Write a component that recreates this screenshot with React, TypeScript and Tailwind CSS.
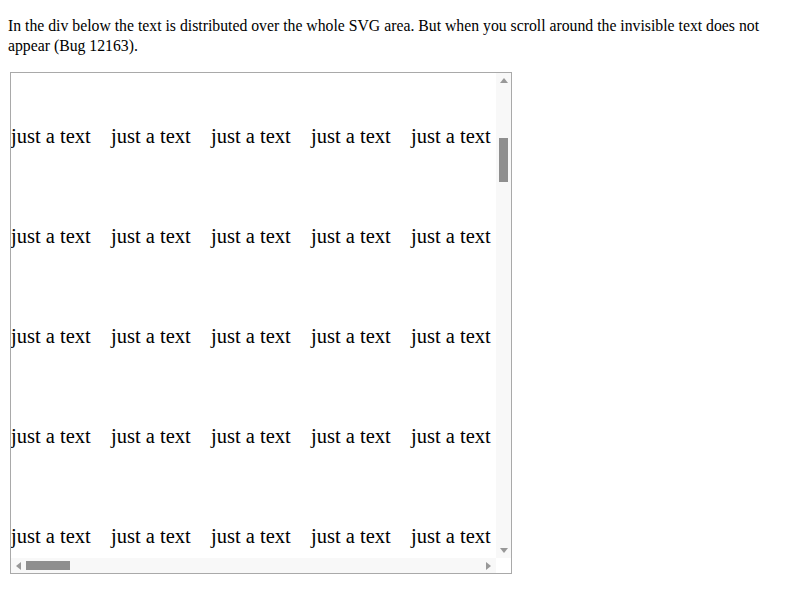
import React from "react";

function Tri({ dir }: { dir: "up" | "down" | "left" | "right" }) {
  if (dir === "up")
    return <div className="w-0 h-0 border-l-[4px] border-r-[4px] border-b-[5px] border-l-transparent border-r-transparent border-b-[#989898]" />;
  if (dir === "down")
    return <div className="w-0 h-0 border-l-[4px] border-r-[4px] border-t-[5px] border-l-transparent border-r-transparent border-t-[#989898]" />;
  if (dir === "left")
    return <div className="w-0 h-0 border-t-[4px] border-b-[4px] border-r-[5px] border-t-transparent border-b-transparent border-r-[#989898]" />;
  return <div className="w-0 h-0 border-t-[4px] border-b-[4px] border-l-[5px] border-t-transparent border-b-transparent border-l-[#989898]" />;
}

export default function App() {
  const items: React.ReactNode[] = [];
  for (let r = 0; r < 50; r++) {
    for (let c = 0; c < 50; c++) {
      items.push(
        <text key={`${r}-${c}`} x={c * 100} y={19 + r * 100}>
          just a text
        </text>
      );
    }
  }
  return (
    <div className="min-h-[600px] bg-white pt-4 px-2 font-['Liberation_Serif',serif] text-black">
      <p className="text-[15.75px] leading-[20px]">
        In the div below the text is distributed over the whole SVG area. But when you scroll around the invisible text does not appear (Bug 12163).
      </p>
      <div className="mt-4 ml-[2px] w-[502px] h-[502px] border border-[#a9a9a9] grid grid-cols-[485px_15px] grid-rows-[485px_15px]">
        <div className="overflow-hidden">
          <svg
            width={485}
            height={485}
            viewBox="0 549 485 485"
            className="block"
            style={{ fontFamily: "'Liberation Serif', serif", fontSize: 20.5 }}
            fill="#000"
          >
            {items}
          </svg>
        </div>
        <div className="flex flex-col bg-[#f8f8f8]">
          <div className="h-[15px] flex items-center justify-center">
            <Tri dir="up" />
          </div>
          <div className="flex-1 pt-[50px] flex flex-col items-center">
            <div className="w-[9px] h-[44px] bg-[#8f8f8f]" />
          </div>
          <div className="h-[15px] flex items-center justify-center">
            <Tri dir="down" />
          </div>
        </div>
        <div className="flex flex-row bg-[#f8f8f8]">
          <div className="w-[15px] flex items-center justify-center">
            <Tri dir="left" />
          </div>
          <div className="flex-1 flex items-center">
            <div className="h-[9px] w-[44px] bg-[#8f8f8f]" />
          </div>
          <div className="w-[15px] flex items-center justify-center">
            <Tri dir="right" />
          </div>
        </div>
        <div className="bg-white" />
      </div>
    </div>
  );
}
